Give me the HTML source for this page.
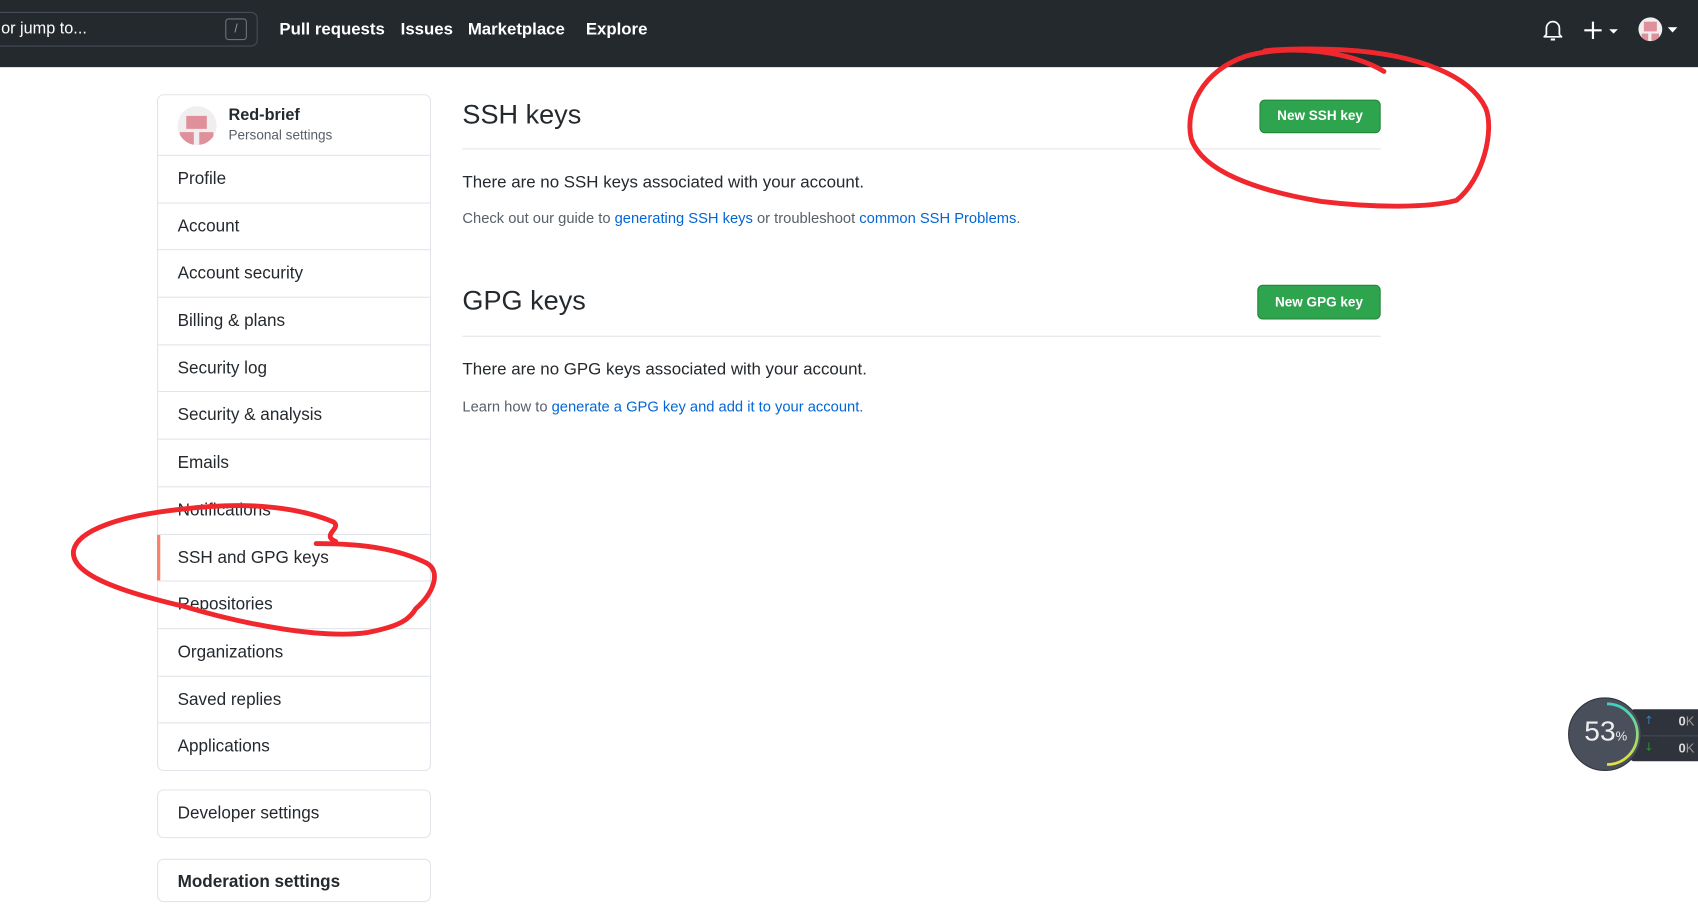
<!DOCTYPE html>
<html><head><meta charset="utf-8"><style>
html,body{margin:0;padding:0;width:1698px;height:879px;overflow:hidden;background:#fff}
#w{position:absolute;left:0;top:0;width:1568px;height:812px;transform:scale(1.08291);transform-origin:0 0;font-family:"Liberation Sans",Arial,sans-serif;color:#24292e}
.hdr{position:absolute;left:0;top:0;width:1568px;height:62px;background:#24292e}
.search{position:absolute;left:-10px;top:11px;width:248px;height:32px;border:1px solid #444d56;border-radius:6px;box-sizing:border-box;color:#fff;font-size:15px;line-height:30px;padding-left:10px}
.slash{position:absolute;right:9px;top:5px;width:20px;height:20px;border:1px solid #6a737d;border-radius:3px;box-sizing:border-box;font-size:11px;line-height:18px;text-align:center;color:#959da5}
.nav{position:absolute;top:19px;color:#fff;font-weight:bold;font-size:15.5px}
.side{position:absolute;left:145px;top:87px;width:253px;border:1px solid #e1e4e8;border-radius:6px;box-sizing:border-box;background:#fff}
.item{height:43.7px;line-height:43px;border-top:1px solid #e1e4e8;padding-left:18px;font-size:15.8px;box-sizing:border-box;position:relative}
h2{margin:0;font-weight:normal;font-size:25px;position:absolute;left:427px}
.hr{position:absolute;left:427px;width:848px;height:1px;background:#e1e4e8}
.t{position:absolute;left:427px;font-size:15.6px}
.s{position:absolute;left:427px;font-size:13.6px;color:#586069}
.s a{color:#0366d6;text-decoration:none}
.btn{position:absolute;background:#2ea44f;border:1px solid #22863a;border-radius:5px;color:#fff;font-weight:bold;font-size:12.5px;text-align:center;box-sizing:border-box}
</style></head><body><div id="w">
<div class="hdr">
 <div class="search">or jump to...<div class="slash">/</div></div>
 <div class="nav" style="left:258px">Pull requests</div>
 <div class="nav" style="left:370px">Issues</div>
 <div class="nav" style="left:432px">Marketplace</div>
 <div class="nav" style="left:541px">Explore</div>
 <svg style="position:absolute;left:1424px;top:16px" width="20" height="24" viewBox="0 0 20 24"><path d="M4 16 L4 10 A6 6 0 0 1 16 10 L16 16 L18 18 L2 18 Z" fill="none" stroke="#fff" stroke-width="1.6" stroke-linejoin="round"/><path d="M8 20.5h4" stroke="#fff" stroke-width="1.8"/></svg>
 <svg style="position:absolute;left:1462px;top:19px" width="34" height="18"><path d="M9 1v16M1 9h16" stroke="#fff" stroke-width="2"/><path d="M24 8h8l-4 4z" fill="#fff"/></svg>
 <div style="position:absolute;left:1513px;top:16px;width:22px;height:22px;border-radius:50%;background:#f0eeee;overflow:hidden"><div style="position:absolute;left:5px;top:4px;width:12px;height:9px;background:#e0909a"></div><div style="position:absolute;left:3px;top:15px;width:6px;height:7px;background:#e0909a"></div><div style="position:absolute;left:12px;top:15px;width:7px;height:7px;background:#e0909a"></div></div>
 <svg style="position:absolute;left:1540px;top:25px" width="10" height="6"><path d="M0 0h9l-4.5 5z" fill="#fff"/></svg>
</div>

<div class="side">
 <div style="height:55px;position:relative">
  <div style="position:absolute;left:18px;top:10px;width:36px;height:36px;border-radius:50%;background:#f0eeee;overflow:hidden"><div style="position:absolute;left:8px;top:9px;width:19px;height:12px;background:#e0909a"></div><div style="position:absolute;left:2px;top:24px;width:13px;height:12px;background:#e0909a"></div><div style="position:absolute;left:20px;top:24px;width:13px;height:12px;background:#e0909a"></div></div>
  <div style="position:absolute;left:65px;top:10px;font-size:15px;font-weight:bold">Red-brief</div>
  <div style="position:absolute;left:65px;top:30px;font-size:12.5px;color:#586069">Personal settings</div>
 </div>
 <div class="item">Profile</div>
 <div class="item">Account</div>
 <div class="item">Account security</div>
 <div class="item">Billing &amp; plans</div>
 <div class="item">Security log</div>
 <div class="item">Security &amp; analysis</div>
 <div class="item">Emails</div>
 <div class="item">Notifications</div>
 <div class="item"><div style="position:absolute;left:-1px;top:0;bottom:0;width:3px;background:#f9826c"></div>SSH and GPG keys</div>
 <div class="item">Repositories</div>
 <div class="item">Organizations</div>
 <div class="item">Saved replies</div>
 <div class="item">Applications</div>
</div>
<div class="side" style="top:729px;height:45px"><div class="item" style="border-top:none">Developer settings</div></div>
<div class="side" style="top:793px;height:40px"><div style="padding:12px 18px;font-weight:bold;font-size:15.8px">Moderation settings</div></div>

<h2 style="top:92px">SSH keys</h2>
<div class="btn" style="left:1163px;top:92px;width:112px;height:31px;line-height:29px">New SSH key</div>
<div class="hr" style="top:137px"></div>
<div class="t" style="top:160px">There are no SSH keys associated with your account.</div>
<div class="s" style="top:194px">Check out our guide to <a>generating SSH keys</a> or troubleshoot <a>common SSH Problems</a>.</div>

<h2 style="top:264px">GPG keys</h2>
<div class="btn" style="left:1161px;top:263px;width:114px;height:32px;line-height:30px">New GPG key</div>
<div class="hr" style="top:310px"></div>
<div class="t" style="top:333px">There are no GPG keys associated with your account.</div>
<div class="s" style="top:368px">Learn how to <a style="color:#0366d6">generate a GPG key and add it to your account</a>.</div>

<div style="position:absolute;left:1505px;top:655px;width:70px;height:48px;background:#2f343c;border-radius:4px"></div>
<div style="position:absolute;left:1505px;top:679px;width:70px;height:1px;background:#454b54"></div>
<div style="position:absolute;left:1520px;top:658px;color:#3aa0e8;font-size:10px">🡑</div>
<div style="position:absolute;left:1520px;top:683px;color:#2cb82c;font-size:10px">🡓</div>
<div style="position:absolute;left:1550px;top:659px;color:#ddd;font-size:12px;font-weight:bold">0<span style="font-weight:normal;color:#999">K</span></div>
<div style="position:absolute;left:1550px;top:684px;color:#ddd;font-size:12px;font-weight:bold">0<span style="font-weight:normal;color:#999">K</span></div>
<div style="position:absolute;left:1448px;top:644px;width:68px;height:68px;border-radius:50%;background:#4a505b;border:1px solid #2f343c;box-sizing:border-box"></div>
<svg style="position:absolute;left:1448px;top:644px" width="68" height="68"><defs><linearGradient id="g" x1="0" y1="0" x2="0" y2="1"><stop offset="0" stop-color="#3cd3c0"/><stop offset="1" stop-color="#e6e23c"/></linearGradient></defs><path d="M36 6 A28 28 0 0 1 36 62" fill="none" stroke="url(#g)" stroke-width="2.5"/></svg>
<div style="position:absolute;left:1463px;top:660px;color:#eee;font-size:26px">53<span style="font-size:12px">%</span></div>

<svg style="position:absolute;left:0;top:0" width="1568" height="812" viewBox="0 0 1568 812"><g fill="none" stroke="#f0282d" stroke-width="4.5" stroke-linecap="round" stroke-linejoin="round">
<path d="M1278 66 C1250 48 1190 40 1150 52 C1110 66 1094 100 1100 128 C1110 158 1160 176 1220 186 C1270 192 1320 192 1345 185 C1370 165 1380 120 1372 100 C1358 70 1310 50 1240 46 C1200 44 1175 46 1168 47"/>
<path d="M310 500 C296 494 316 488 308 482 C270 466 220 464 170 470 C110 476 72 490 68 508 C64 530 110 546 170 560 C230 578 300 590 340 584 C370 578 378 572 384 562 C400 548 408 528 394 520 C370 508 340 502 292 502"/>
</g></svg>
</div></body></html>
